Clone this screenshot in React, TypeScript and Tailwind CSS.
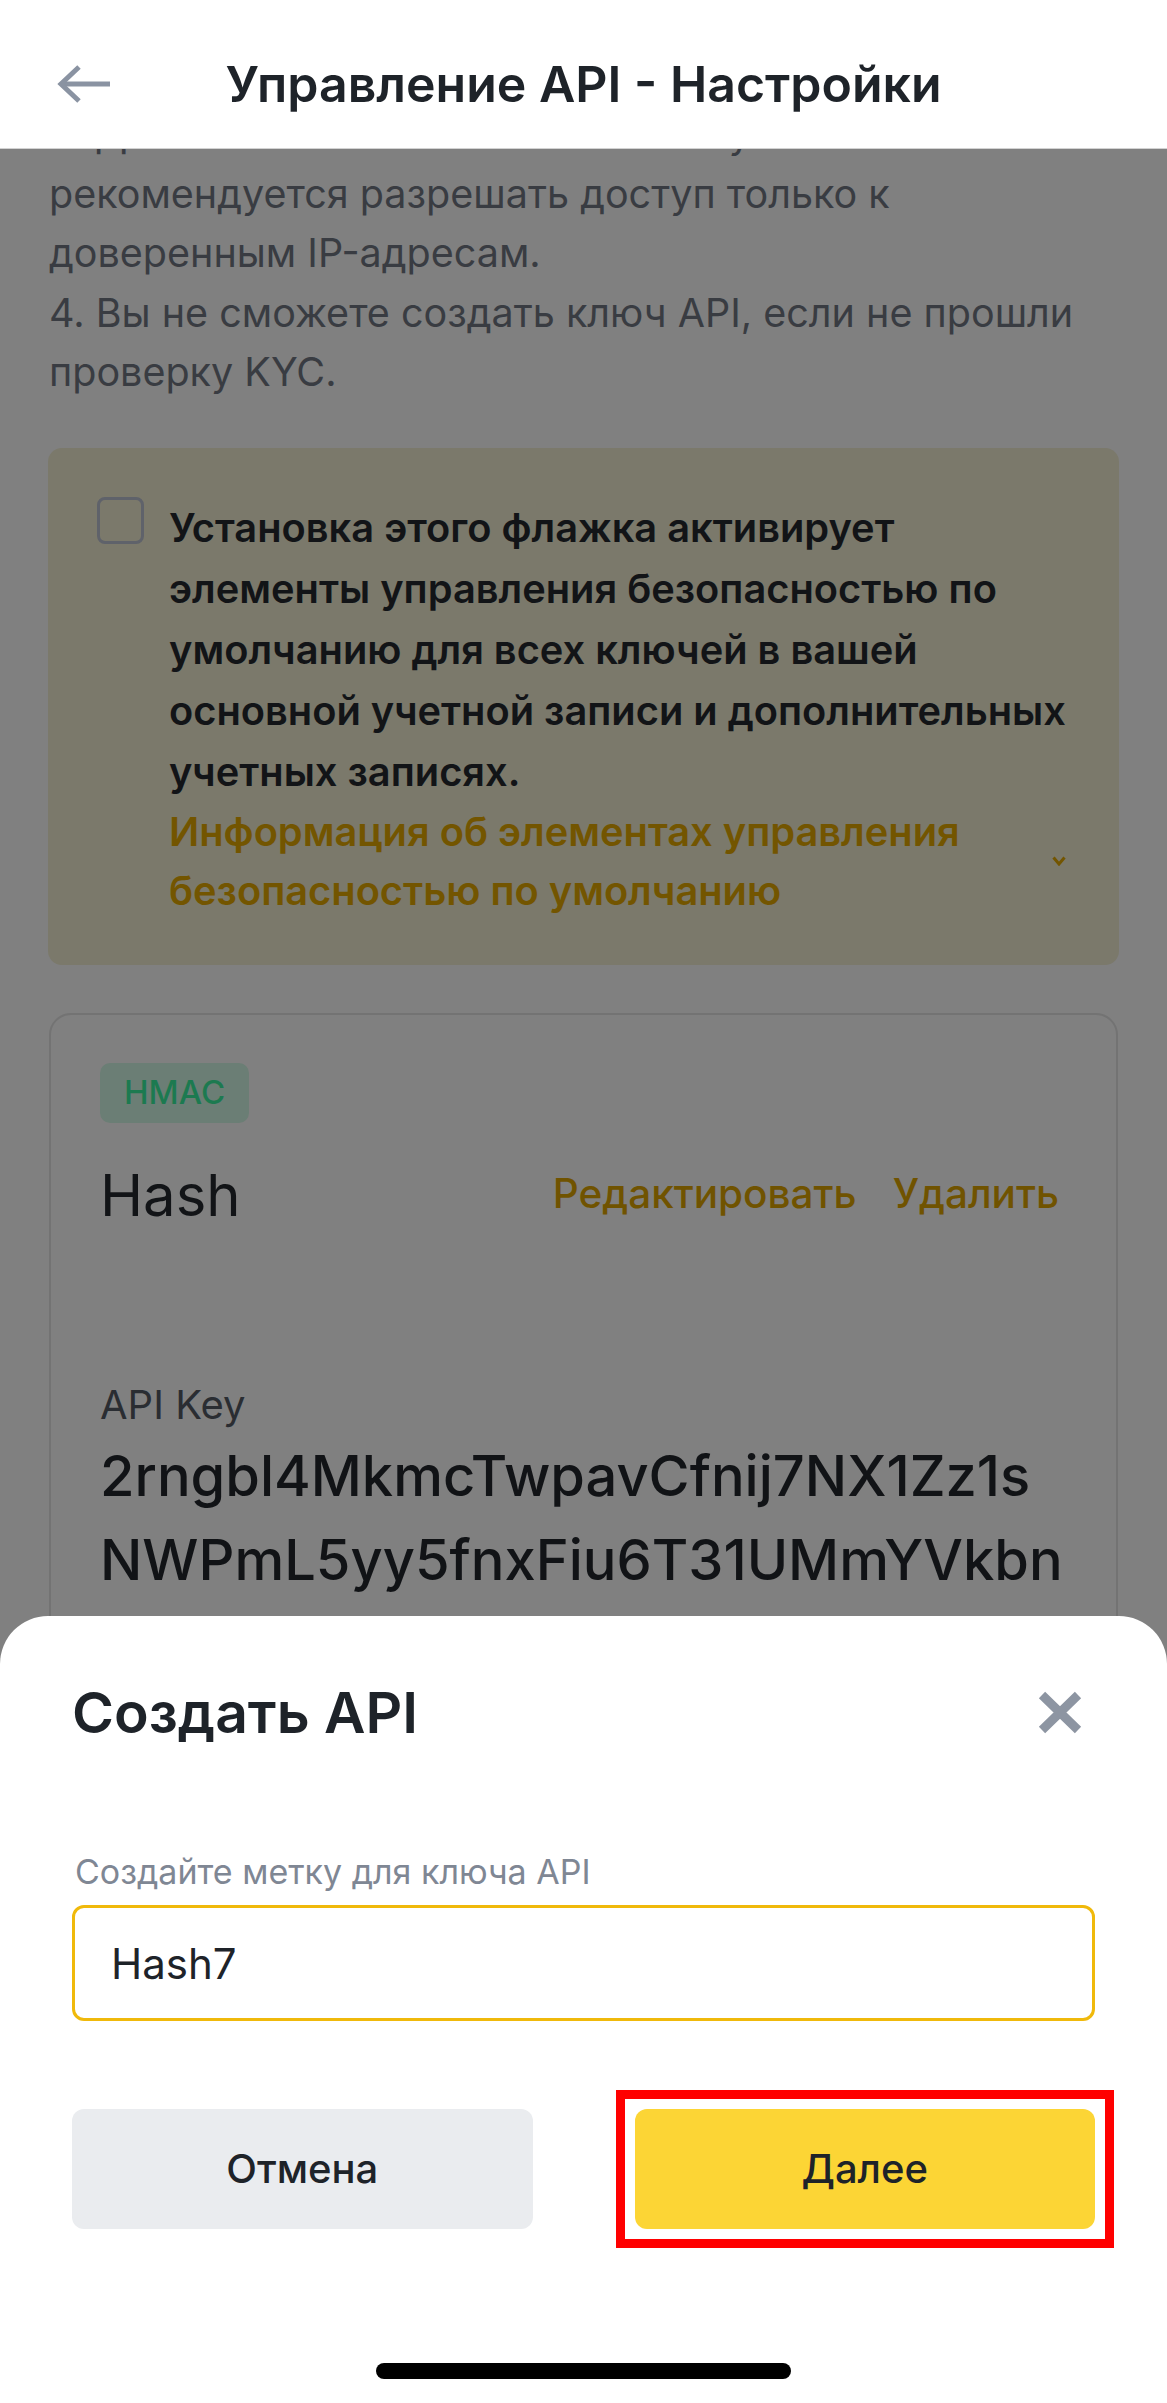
import React from "react";

function BackArrow() {
  return (
    <svg width="54" height="40" viewBox="0 0 54 40" fill="none">
      <path d="M53 20H5" stroke="#8a93a2" strokeWidth="5" />
      <path d="M22 3L4 20L22 37" stroke="#8a93a2" strokeWidth="5" />
    </svg>
  );
}

function CloseIcon() {
  return (
    <svg width="46" height="45" viewBox="0 0 46 45" fill="none">
      <path d="M5 5L41 40M41 5L5 40" stroke="#8d95a2" strokeWidth="9" />
    </svg>
  );
}

function Chevron() {
  return (
    <svg width="14" height="10" viewBox="0 0 14 10" fill="none">
      <path d="M1.5 1.5L7 8L12.5 1.5" stroke="#735500" strokeWidth="3" />
    </svg>
  );
}

export default function App() {
  return (
    <div className="relative h-[2403px] w-[1167px] overflow-hidden bg-[#808080] font-[Inter,'Noto_Sans',sans-serif]">
      {/* Header */}
      <header className="relative z-10 grid h-[149px] grid-cols-[1fr_auto_1fr] items-center border-b border-[#d2d2d2] bg-white pt-[19px]">
        <div className="pl-[57px]">
          <BackArrow />
        </div>
        <h1 className="text-[50px] font-semibold leading-none text-[#1e2329]">
          Управление API - Настройки
        </h1>
        <div />
      </header>

      {/* Scrolled content under dim overlay */}
      <main className="h-[2254px] overflow-hidden">
        <div className="-mt-[44px] px-[49px]">
          <p className="whitespace-nowrap text-[39.5px] leading-[59.5px] text-[#393c42]">
            3. Для обеспечения безопасности учетной записи
            <br />
            рекомендуется разрешать доступ только к
            <br />
            доверенным IP-адресам.
            <br />
            4. Вы не сможете создать ключ API, если не прошли
            <br />
            проверку KYC.
          </p>

          {/* Yellow notice */}
          <div className="-mx-px mt-[45px] flex gap-[25px] rounded-[14px] bg-[#7b796b] pb-[45px] pl-[49px] pr-[56px] pt-[49px]">
            <div className="h-[47px] w-[47px] shrink-0 rounded-[8px] border-[3px] border-[#5f626a]" />
            <div className="flex-1">
              <p className="whitespace-nowrap text-[39.8px] font-semibold leading-[61px] text-[#121417]">
                Установка этого флажка активирует
                <br />
                элементы управления безопасностью по
                <br />
                умолчанию для всех ключей в вашей
                <br />
                основной учетной записи и дополнительных
                <br />
                учетных записях.
              </p>
              <div className="flex items-center justify-between">
                <p className="whitespace-nowrap text-[39.8px] font-semibold leading-[59px] text-[#735500]">
                  Информация об элементах управления
                  <br />
                  безопасностью по умолчанию
                </p>
                <Chevron />
              </div>
            </div>
          </div>

          {/* API key card */}
          <div className="mt-[48px] rounded-[22px] border-2 border-[#737373] px-[49px] pb-[200px] pt-[48px]">
            <span className="inline-flex h-[60px] items-center rounded-[10px] bg-[#6b7e75] px-[24px] text-[33px] font-medium text-[#1c7a50]">
              HMAC
            </span>
            <div className="mt-[36px] flex h-[72px] items-center justify-between pr-[8px]">
              <span className="text-[58px] leading-none text-[#121417]">Hash</span>
              <div className="flex gap-[36px] text-[40.5px] font-medium text-[#705300]">
                <span>Редактировать</span>
                <span>Удалить</span>
              </div>
            </div>
            <div className="mt-[150px] text-[40px] leading-[48px] text-[#2a2d32]">API Key</div>
            <div className="mt-[5px] whitespace-nowrap text-[56px] font-medium leading-[84px] text-[#111316]">
              2rngbl4MkmcTwpavCfnij7NX1Zz1s
              <br />
              NWPmL5yy5fnxFiu6T31UMmYVkbn
            </div>
          </div>
        </div>
      </main>

      {/* Bottom sheet */}
      <section className="absolute bottom-0 left-0 right-0 h-[787px] rounded-t-[48px] bg-white px-[72px] pt-[60px]">
        <div className="flex h-[72px] items-center justify-between">
          <h2 className="text-[57px] font-semibold leading-none text-[#1e2329]">Создать API</h2>
          <div className="mr-[12px]">
            <CloseIcon />
          </div>
        </div>
        <label className="mt-[104px] block pl-[3px] text-[34px] leading-[40px] text-[#7f8794]">
          Создайте метку для ключа API
        </label>
        <div className="mt-[13px] flex h-[116px] items-center rounded-[12px] border-[3px] border-[#f0b90b] pl-[36px] text-[42px] text-[#1e2329]">
          Hash7
        </div>
        <div className="mt-[88px] grid h-[120px] grid-cols-2 gap-[102px]">
          <button className="rounded-[12px] bg-[#eaecef] text-[40px] font-medium text-[#1e2329]">
            Отмена
          </button>
          <div className="relative">
            <button className="h-full w-full rounded-[12px] bg-[#fcd535] text-[40px] font-medium text-[#1e2329]">
              Далее
            </button>
            <div className="pointer-events-none absolute -inset-[19px] border-[9px] border-[#ff0000]" />
          </div>
        </div>
        <div className="mx-auto mt-[134px] h-[16px] w-[415px] rounded-full bg-black" />
      </section>
    </div>
  );
}
